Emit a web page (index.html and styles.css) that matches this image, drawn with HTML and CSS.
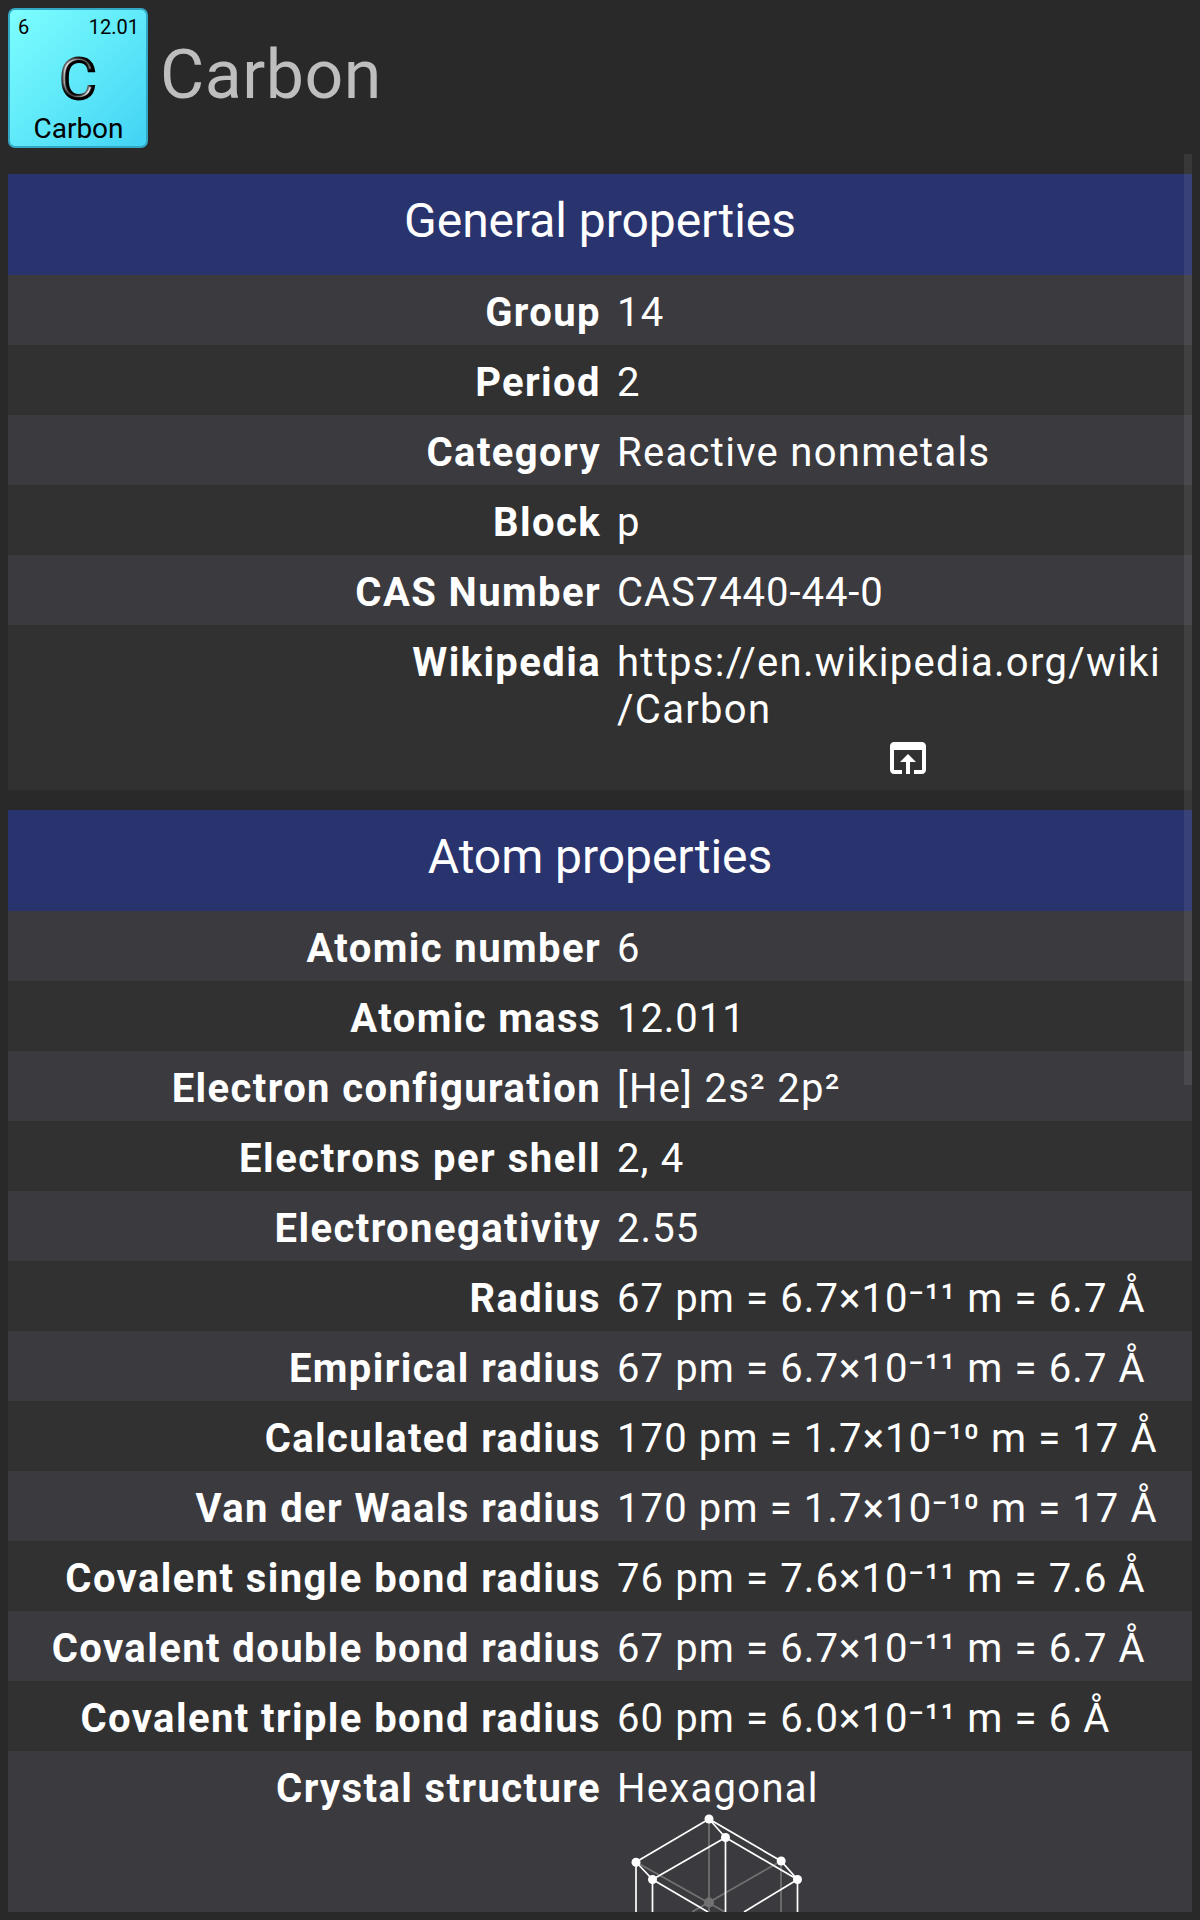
FILE: index.html
```html
<!DOCTYPE html>
<html lang="en">
<head>
<meta charset="utf-8">
<title>Carbon</title>
<link rel="stylesheet" href="styles.css">
</head>
<body>
<div class="screen">
  <header class="top">
    <div class="tile">
      <div class="tile-head"><span>6</span><span>12.01</span></div>
      <svg class="symbol" viewBox="0 0 100 64" width="100" height="64">
        <defs>
          <filter id="bevel" x="-20%" y="-20%" width="140%" height="140%" color-interpolation-filters="sRGB">
            <feGaussianBlur in="SourceAlpha" stdDeviation="1.800" result="soft"/>
            <feSpecularLighting in="soft" surfaceScale="5" specularConstant="1.100" specularExponent="5" lighting-color="#d0d0d0" result="light">
              <feDistantLight azimuth="215" elevation="20"/>
            </feSpecularLighting>
            <feComposite in="light" in2="SourceAlpha" operator="in" result="shine"/>
            <feMerge><feMergeNode in="SourceGraphic"/><feMergeNode in="shine"/></feMerge>
          </filter>
        </defs>
        <text x="50" y="50.500" text-anchor="middle" filter="url(#bevel)">C</text>
      </svg>
      <div class="tile-name">Carbon</div>
    </div>
    <h1 class="title">Carbon</h1>
  </header>
  <main class="list">
    <section class="group">
      <h2 class="heading">General properties</h2>
      <div class="row"><div class="label">Group</div><div class="value">14</div></div>
      <div class="row"><div class="label">Period</div><div class="value">2</div></div>
      <div class="row"><div class="label">Category</div><div class="value">Reactive nonmetals</div></div>
      <div class="row"><div class="label">Block</div><div class="value">p</div></div>
      <div class="row"><div class="label">CAS Number</div><div class="value code">CAS7440-44-0</div></div>
      <div class="row row-link"><div class="label">Wikipedia</div><div class="value">https://en.wikipedia.org/wiki<br>/Carbon
        <svg class="open" viewBox="0 0 24 24" width="48" height="48"><path fill="#fff" d="M19 4H5c-1.110 0-2 .9-2 2v12c0 1.100.89 2 2 2h4v-2H5V8h14v10h-4v2h4c1.100 0 2-.9 2-2V6c0-1.100-.89-2-2-2zm-7 6l-4 4h3v6h2v-6h3l-4-4z"/></svg></div></div>
    </section>
    <section class="group">
      <h2 class="heading">Atom properties</h2>
      <div class="row"><div class="label">Atomic number</div><div class="value">6</div></div>
      <div class="row"><div class="label">Atomic mass</div><div class="value code">12.011</div></div>
      <div class="row"><div class="label">Electron configuration</div><div class="value">[He] 2s² 2p²</div></div>
      <div class="row"><div class="label wide">Electrons per shell</div><div class="value num">2, 4</div></div>
      <div class="row"><div class="label">Electronegativity</div><div class="value num">2.55</div></div>
      <div class="row"><div class="label">Radius</div><div class="value num">67 pm = 6.7×10⁻¹¹ m = 6.7 Å</div></div>
      <div class="row"><div class="label">Empirical radius</div><div class="value num">67 pm = 6.7×10⁻¹¹ m = 6.7 Å</div></div>
      <div class="row"><div class="label">Calculated radius</div><div class="value num">170 pm = 1.7×10⁻¹⁰ m = 17 Å</div></div>
      <div class="row"><div class="label">Van der Waals radius</div><div class="value num">170 pm = 1.7×10⁻¹⁰ m = 17 Å</div></div>
      <div class="row"><div class="label">Covalent single bond radius</div><div class="value num">76 pm = 7.6×10⁻¹¹ m = 7.6 Å</div></div>
      <div class="row"><div class="label">Covalent double bond radius</div><div class="value num">67 pm = 6.7×10⁻¹¹ m = 6.7 Å</div></div>
      <div class="row"><div class="label">Covalent triple bond radius</div><div class="value num">60 pm = 6.0×10⁻¹¹ m = 6 Å</div></div>
      <div class="row row-crystal"><div class="label">Crystal structure</div><div class="value">Hexagonal
        <svg class="crystal" viewBox="617 1812 200 100" width="200" height="100">
          <g fill="none" stroke="#727272" stroke-width="1.700">
            <path d="M709 1819V1912M781 1861V1912M636 1862L725 1912M781 1861L692 1912"/>
          </g>
          <circle cx="709" cy="1902.500" r="5" fill="#727272"/>
          <g fill="none" stroke="#fff" stroke-width="1.700">
            <path d="M636 1912V1862L709 1819L781 1861L797.500 1879.500V1912M709 1819L725.500 1837.500V1912M636 1862L652.500 1879.500V1912M652.500 1879.500L725.500 1837.500L797.500 1879.500M652.500 1879.500L708 1912M797.500 1879.500L744 1912"/>
          </g>
          <g fill="#fff"><circle cx="709" cy="1819" r="4.500"/><circle cx="725.500" cy="1837.500" r="4.500"/><circle cx="636" cy="1862.300" r="4.500"/><circle cx="652.500" cy="1879.500" r="4.500"/><circle cx="781.200" cy="1861" r="4.500"/><circle cx="797.500" cy="1879.500" r="4.500"/></g>
        </svg></div></div>
    </section>
    <div class="scrollbar"></div>
  </main>
</div>
</body>
</html>
```
FILE: styles.css
```css
* { box-sizing: border-box; }
body { margin: 0; background: #292929; color: #fff; font-family: Roboto, sans-serif; }
.screen { display: flex; flex-direction: column; width: 1200px; height: 1920px; padding: 8px; overflow: hidden; }
.top { display: flex; height: 146px; gap: 12px; }
.tile { display: flex; flex-direction: column; align-items: center; width: 140px; height: 140px; border: 2px solid #32a8c4; border-radius: 7px; background: linear-gradient(135deg, #7fffff 0%, #74f8fd 15%, #42d3f4 100%); color: #000; }
.tile-head { display: flex; justify-content: space-between; width: 100%; padding: 5px 7px 0 8px; font-size: 20px; line-height: 24px; }
.symbol { display: block; flex: none; margin-top: 9px; }
.symbol text { font-size: 58px; fill: #000; stroke: #000; stroke-width: 2px; }
.tile-name { margin: 1px 0 0 1px; font-size: 28px; line-height: 32px; }
.title { margin: 27px 0 0; font-size: 68px; line-height: 80px; font-weight: 400; letter-spacing: .5px; color: #bebebe; }
.list { position: relative; flex: 1; display: flex; flex-direction: column; gap: 20px; padding-top: 20px; overflow: hidden; }
.group { flex: none; }
.heading { margin: 0; height: 101px; padding-top: 18px; background: #29336e; font-size: 48px; line-height: 58px; font-weight: 400; letter-spacing: -.05px; text-align: center; }
.row { display: grid; grid-template-columns: 593px 1fr; column-gap: 16px; height: 70px; padding-top: 14px; background: #3b3a3f; font-size: 40px; line-height: 47px; letter-spacing: 1.3px; white-space: nowrap; }
.row:nth-child(odd) { background: #313131; }
.label { text-align: right; font-weight: 700; letter-spacing: 1.4px; }
.wide { letter-spacing: 1.52px; }
.num { letter-spacing: 1.12px; }
.code { letter-spacing: .95px; }
.row-link { height: 165px; }
.row-crystal { height: 240px; }
.row.row-crystal { background: #3b3a3f; }
.open { display: block; margin: 1px 260px 0 auto; }
.crystal { display: block; }
.scrollbar { position: absolute; top: 0; right: 0; width: 8px; height: 931px; background: rgba(255, 255, 255, .075); }
```
